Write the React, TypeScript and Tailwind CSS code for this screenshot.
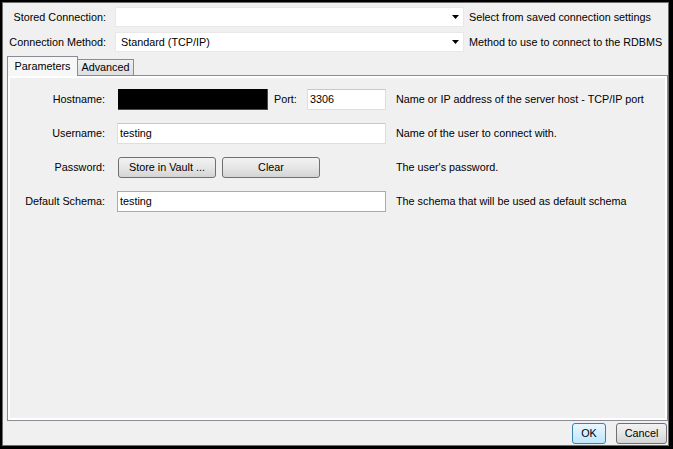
import React from 'react';

const Arrow = () => (
  <svg width="7" height="4" viewBox="0 0 7 4" className="shrink-0">
    <path d="M0 0h7L3.5 4z" fill="#000" />
  </svg>
);

const Combo = ({ value }: { value?: string }) => (
  <div className="ml-[9px] w-[349px] h-[20px] bg-white border border-[#e8e8e8] flex items-center pl-[5px] pr-[4px]">
    <span className="flex-1">{value}</span>
    <Arrow />
  </div>
);

const Input = ({ value, focused, w = 'w-[269px]' }: { value: string; focused?: boolean; w?: string }) => (
  <div
    className={`${w} h-[21px] bg-white border flex items-center pl-[2px] ${
      focused ? 'border-[#7eb4ea]' : 'border-[#dedede] border-t-[#c8c8c8]'
    }`}
  >
    {value}
  </div>
);

const Button = ({ label, className = '' }: { label: string; className?: string }) => (
  <div
    className={`h-[21px] rounded-[3px] border border-[#707070] bg-gradient-to-b from-[#f2f2f2] via-[#e6e6e6] to-[#d4d4d4] flex items-center justify-center ${className}`}
  >
    {label}
  </div>
);

export default function App() {
  return (
    <div className="w-[673px] h-[449px] bg-black pt-[2px] pl-[2px] pr-[4px] pb-[3px] font-['Liberation_Sans',Arial,sans-serif] text-[10.8px] text-black leading-none">
      <div className="h-full border border-[#6d6d6d] bg-[#f0f0f0] flex flex-col">
        {/* top settings */}
        <div className="pt-[4px] flex flex-col gap-[5px]">
          <div className="flex items-center">
            <div className="w-[103px] text-right">Stored Connection:</div>
            <Combo />
            <div className="ml-[5px]">Select from saved connection settings</div>
          </div>
          <div className="flex items-center">
            <div className="w-[103px] text-right">Connection Method:</div>
            <Combo value="Standard (TCP/IP)" />
            <div className="ml-[5px]">Method to use to connect to the RDBMS</div>
          </div>
        </div>

        {/* tabs */}
        <div className="mt-[3px] ml-[4px] h-[20px] flex items-end">
          <div className="relative top-px z-10 h-[20px] w-[71px] border border-b-0 border-[#898c95] bg-[#f7f7f7] flex items-center justify-center">
            Parameters
          </div>
          <div className="h-[16px] w-[56px] border border-l-0 border-b-0 border-[#898c95] bg-gradient-to-b from-[#f0f0f0] to-[#dedede] flex items-center justify-center">
            Advanced
          </div>
        </div>

        {/* tab panel */}
        <div className="ml-[4px] flex-1 border border-[#898c95] bg-white p-[2px] flex">
          <div className="flex-1 bg-[#f0f0f0] pt-[11px] flex flex-col gap-[13px]">
            <div className="flex items-center h-[21px]">
              <div className="w-[95px] text-right">Hostname:</div>
              <div className="ml-[13px] w-[150px] h-[21px] bg-black border-b border-r border-[#4a4a4a]" />
              <div className="ml-[6px] w-[33px]">Port:</div>
              <Input value="3306" w="w-[79px]" />
              <div className="ml-[10px]">Name or IP address of the server host - TCP/IP port</div>
            </div>
            <div className="flex items-center h-[21px]">
              <div className="w-[95px] text-right">Username:</div>
              <div className="ml-[12px]">
                <Input value="testing" />
              </div>
              <div className="ml-[10px]">Name of the user to connect with.</div>
            </div>
            <div className="flex items-center h-[21px]">
              <div className="w-[95px] text-right">Password:</div>
              <div className="ml-[13px] w-[268px] flex gap-[6px]">
                <Button label="Store in Vault ..." className="w-[98px]" />
                <Button label="Clear" className="w-[98px]" />
              </div>
              <div className="ml-[10px]">The user's password.</div>
            </div>
            <div className="flex items-center h-[21px]">
              <div className="w-[95px] text-right">Default Schema:</div>
              <div className="ml-[12px]">
                <Input value="testing" focused />
              </div>
              <div className="ml-[10px]">The schema that will be used as default schema</div>
            </div>
          </div>
        </div>

        {/* footer */}
        <div className="h-[24px] pt-[2px] pr-[1px] flex justify-end gap-[10px]">
          <div className="w-[34px] h-[21px] rounded-[3px] border border-[#3c7fb1] bg-gradient-to-b from-[#eaf6fd] to-[#bee6fd] flex items-center justify-center">
            OK
          </div>
          <Button label="Cancel" className="w-[51px]" />
        </div>
      </div>
    </div>
  );
}
